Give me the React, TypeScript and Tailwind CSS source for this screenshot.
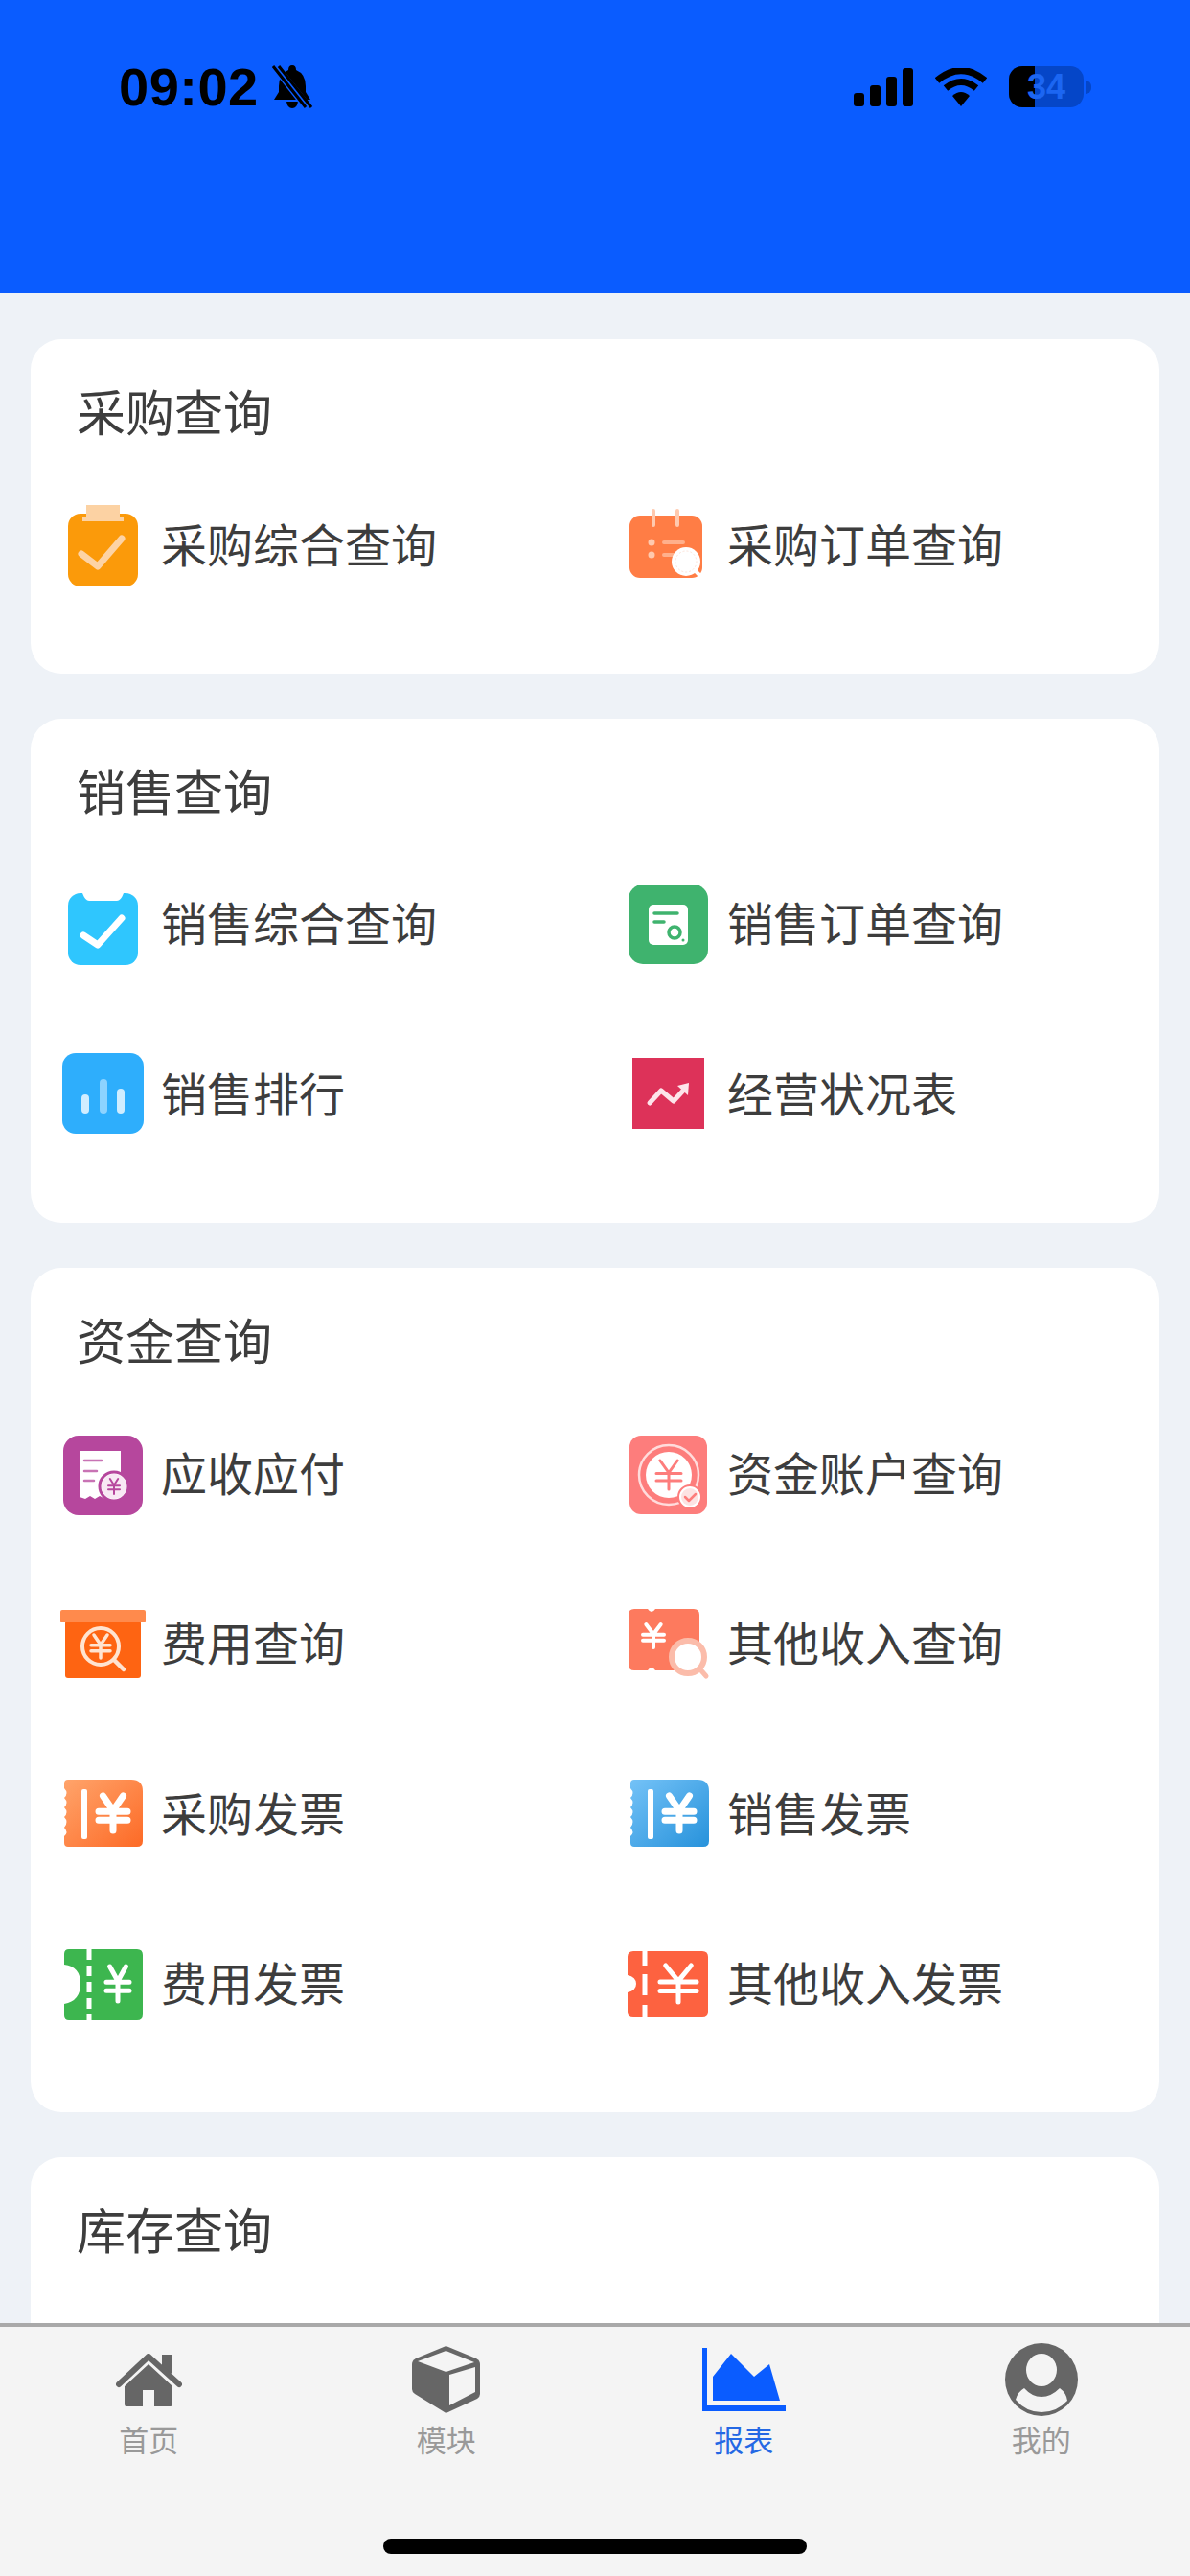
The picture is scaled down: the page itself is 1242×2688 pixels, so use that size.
import type { ReactNode } from 'react'

const Yen = ({ x, y, w, h, color, width = 4 }: { x: number; y: number; w: number; h: number; color: string; width?: number }) => (
  <path
    d={`M${x - w * 0.7} ${y - h} L${x} ${y - h * 0.15} L${x + w * 0.7} ${y - h} M${x - w} ${y - h * 0.1} H${x + w} M${x - w} ${y + h * 0.4} H${x + w} M${x} ${y - h * 0.15} V${y + h}`}
    fill="none"
    stroke={color}
    strokeWidth={width}
    strokeLinecap="round"
    strokeLinejoin="round"
  />
)

const ScallopTicket = ({ id, from, to }: { id: string; from: string; to: string }) => (
  <>
    <defs>
      <linearGradient id={id} x1="0" y1="0" x2="1" y2="1">
        <stop offset="0" stopColor={from} />
        <stop offset="1" stopColor={to} />
      </linearGradient>
    </defs>
    <path
      d="M11 12 H77 Q89 12 89 24 V76 Q89 82 83 82 H11 Q7 82 7 78 V71 Q12 67 7 62 Q12 56 7 51 Q12 46 7 41 Q12 36 7 31 Q12 26 7 21 V16 Q7 12 11 12 Z"
      fill={`url(#${id})`}
    />
    <rect x="25" y="22" width="6" height="52" rx="2" fill="#fff" />
    <Yen x={58} y={47} w={15} h={18} color="#fff" width={7} />
  </>
)

const icons: Record<string, ReactNode> = {
  purchaseAll: (
    <>
      <rect x="11" y="15" width="73" height="76" rx="13" fill="#fb9a0a" />
      <path d="M30 6 H65 V19 H69 V23 H26 V19 H30 Z" fill="#fcd2a3" />
      <path d="M25 57 L42 70 L67 41" fill="none" stroke="#fdd3a5" strokeWidth="7" strokeLinecap="round" strokeLinejoin="round" />
    </>
  ),
  purchaseOrder: (
    <>
      <rect x="6" y="17" width="76" height="65" rx="11" fill="#ff7d45" />
      <path d="M31 12 V27 M56 12 V27" stroke="#ffc9ae" strokeWidth="4" strokeLinecap="round" />
      <circle cx="29" cy="45" r="3.5" fill="#ffc9ae" />
      <circle cx="29" cy="58" r="3.5" fill="#ffc9ae" />
      <path d="M42 45 H62 M42 58 H54" stroke="#ffb08c" strokeWidth="4" strokeLinecap="round" />
      <circle cx="65" cy="65" r="15" fill="#fff" />
      <circle cx="65" cy="65" r="11" fill="none" stroke="#fde3d8" strokeWidth="1" strokeDasharray="2 2" />
      <path d="M75 75 L80 80" stroke="#fff" strokeWidth="4" strokeLinecap="round" />
    </>
  ),
  salesAll: (
    <>
      <rect x="11" y="16" width="73" height="75" rx="13" fill="#2fc6fe" />
      <path d="M26 16 Q29 24 33 24 H62 Q66 24 69 16 Z" fill="#fff" />
      <path d="M27 60 L42 70 L67 42" fill="none" stroke="#fff" strokeWidth="7" strokeLinecap="round" strokeLinejoin="round" />
    </>
  ),
  salesOrder: (
    <>
      <rect x="5" y="7" width="83" height="83" rx="15" fill="#3fb36e" />
      <rect x="26" y="28" width="41" height="42" rx="5" fill="#fff" />
      <path d="M32 37 H56 M32 46 H42" stroke="#3fb36e" strokeWidth="3.5" strokeLinecap="round" />
      <circle cx="53" cy="57" r="6" fill="none" stroke="#3fb36e" strokeWidth="3.5" />
      <circle cx="62" cy="65" r="1.5" fill="#3fb36e" />
    </>
  ),
  salesRank: (
    <>
      <rect x="5" y="5" width="85" height="84" rx="14" fill="#2eaefc" />
      <rect x="25" y="48" width="8" height="20" rx="4" fill="#d0edff" />
      <rect x="44" y="32" width="8" height="36" rx="4" fill="#8dd3ff" />
      <rect x="62" y="42" width="8" height="26" rx="4" fill="#d0edff" />
    </>
  ),
  business: (
    <>
      <rect x="9" y="10" width="75" height="74" fill="#dd3259" />
      <path d="M27 57 L39 44 L52 55 L63 43" fill="none" stroke="#fde4ea" strokeWidth="5" strokeLinecap="round" strokeLinejoin="round" />
      <path d="M56 39 L68 36 L67 49 Z" fill="#fde4ea" />
    </>
  ),
  receivable: (
    <>
      <rect x="6" y="8" width="83" height="83" rx="16" fill="#b6479d" />
      <path d="M23 24 H66 V60 H23 Z M23 60 V72 L29 74 L34 71 L39 74 L44 71 L50 74 V60 Z" fill="#fff" />
      <path d="M28 34 H46 M28 45 H41 M28 55 H38" stroke="#c873b4" strokeWidth="2.5" strokeLinecap="round" />
      <circle cx="59" cy="61" r="15" fill="#fff" stroke="#b6479d" strokeWidth="3" />
      <circle cx="59" cy="61" r="13" fill="#f8e9f4" />
      <Yen x={59} y={61} w={6} h={8} color="#b6479d" width={2} />
    </>
  ),
  account: (
    <>
      <rect x="6" y="8" width="81" height="82" rx="12" fill="#fd7d7c" />
      <circle cx="47" cy="49" r="31" fill="none" stroke="#ffdcdc" strokeWidth="2.5" />
      <circle cx="47" cy="49" r="24" fill="#fff" />
      <Yen x={47} y={49} w={13} h={15} color="#fd7d7c" width={3} />
      <circle cx="69" cy="72" r="12" fill="#fff" stroke="#fd7d7c" strokeWidth="2" />
      <circle cx="69" cy="72" r="9" fill="#fde3e3" />
      <path d="M64 72 L68 76 L75 69" fill="none" stroke="#fd7d7c" strokeWidth="2.5" strokeLinecap="round" strokeLinejoin="round" />
    </>
  ),
  expense: (
    <>
      <rect x="8" y="24" width="79" height="60" rx="3" fill="#fe6412" />
      <rect x="3" y="13" width="89" height="13" rx="2" fill="#ff8a4c" />
      <circle cx="45" cy="51" r="19" fill="none" stroke="#ffe3d0" strokeWidth="4" />
      <Yen x={45} y={51} w={10} h={12} color="#ffe3d0" width={3.5} />
      <path d="M59 65 L69 75" stroke="#ffe3d0" strokeWidth="4.5" strokeLinecap="round" />
    </>
  ),
  otherQuery: (
    <>
      <path d="M11 12 H25 Q29 18 33 12 H73 Q79 12 79 18 V70 Q79 76 73 76 H33 Q29 70 25 76 H11 Q5 76 5 70 V18 Q5 12 11 12 Z" fill="#fd7a5e" />
      <Yen x={31} y={40} w={11} h={12} color="#fff" width={4} />
      <path d="M79 74 L86 82" stroke="#fbbcaa" strokeWidth="5" strokeLinecap="round" />
      <circle cx="67" cy="62" r="17" fill="#fff" stroke="#fbbcaa" strokeWidth="6" />
    </>
  ),
  purchaseInvoice: <ScallopTicket id="ticketOrange" from="#ffa46b" to="#fd6a26" />,
  salesInvoice: <ScallopTicket id="ticketBlue" from="#74c2f7" to="#2792db" />,
  expenseInvoice: (
    <>
      <path d="M12 12 H83 Q89 12 89 18 V80 Q89 86 83 86 H12 Q7 86 7 81 V69 Q24 66 24 48 Q24 30 7 28 V17 Q7 12 12 12 Z" fill="#3db64f" />
      <path d="M33 12 V86" stroke="#fff" strokeWidth="5" strokeDasharray="11 6" />
      <Yen x={63} y={48} w={12} h={18} color="#fff" width={5} />
    </>
  ),
  otherInvoice: (
    <>
      <path d="M10 14 H82 Q88 14 88 20 V77 Q88 83 82 83 H10 Q4 83 4 77 V57 Q13 55 13 48 Q13 41 4 39 V20 Q4 14 10 14 Z" fill="#fd6240" />
      <path d="M22 14 V29 M22 38 V60 M22 70 V83" stroke="#fff" strokeWidth="5" />
      <Yen x={57} y={48} w={19} h={19} color="#fff" width={5} />
    </>
  ),
  stock: <rect x="15" y="8" width="63" height="80" rx="10" fill="#6fb0d8" />,
}

const sections = [
  {
    title: '采购查询',
    items: [
      ['purchaseAll', '采购综合查询'],
      ['purchaseOrder', '采购订单查询'],
    ],
  },
  {
    title: '销售查询',
    items: [
      ['salesAll', '销售综合查询'],
      ['salesOrder', '销售订单查询'],
      ['salesRank', '销售排行'],
      ['business', '经营状况表'],
    ],
  },
  {
    title: '资金查询',
    items: [
      ['receivable', '应收应付'],
      ['account', '资金账户查询'],
      ['expense', '费用查询'],
      ['otherQuery', '其他收入查询'],
      ['purchaseInvoice', '采购发票'],
      ['salesInvoice', '销售发票'],
      ['expenseInvoice', '费用发票'],
      ['otherInvoice', '其他收入发票'],
    ],
  },
  {
    title: '库存查询',
    items: [['stock', '']],
  },
]

function StatusBar() {
  return (
    <div className="flex h-[306px] shrink-0 items-start justify-between bg-[#0a5cff] pl-[124px] pr-[103px] pt-[68px] font-['Liberation_Sans',sans-serif] text-black">
      <div className="flex h-[45px] items-center">
        <span className="text-[56px] leading-[45px] font-bold tracking-[0.5px]">09:02</span>
        <svg className="ml-[13px]" width="44" height="46" viewBox="0 0 44 46">
          <path d="M22 0 Q26 0 26 5 Q36 9 36 22 V28 L41 36 H3 L8 28 V22 Q8 9 18 5 Q18 0 22 0 Z M16 38 H28 Q27 45 22 45 Q17 45 16 38 Z" fill="#000" />
          <path d="M4 1 L38 44" stroke="#0a5cff" strokeWidth="9" />
          <path d="M2 1 L36 44 M8 1 L42 44" stroke="#000" strokeWidth="3" />
        </svg>
      </div>
      <div className="flex h-[45px] items-center">
        <div className="flex items-end gap-[6px]">
          <div className="h-[14px] w-[11px] rounded-[3px] bg-black" />
          <div className="h-[22px] w-[11px] rounded-[3px] bg-black" />
          <div className="h-[31px] w-[11px] rounded-[3px] bg-black" />
          <div className="h-[40px] w-[11px] rounded-[3px] bg-black" />
        </div>
        <svg className="ml-[23px]" width="54" height="40" viewBox="0 0 54 40">
          <path d="M2 13 Q27 -8 52 13" fill="none" stroke="#000" strokeWidth="7" />
          <path d="M11 21 Q27 8 43 21" fill="none" stroke="#000" strokeWidth="7" />
          <path d="M18 29 Q27 21 36 29 L27 40 Z" fill="#000" />
        </svg>
        <div className="relative ml-[23px] flex h-[43px] w-[78px] items-center justify-center overflow-hidden rounded-[14px] bg-[#0546c8]">
          <div className="absolute inset-y-0 left-0 w-[27px] bg-black" />
          <span className="relative text-[36px] leading-none font-bold text-[#1c66f2]">34</span>
        </div>
        <div className="ml-[2px] h-[14px] w-[6px] rounded-r-full bg-[#0546c8]" />
      </div>
    </div>
  )
}

function TabIcon({ name }: { name: string }) {
  if (name === 'home') {
    return (
      <svg width="69" height="55" viewBox="0 0 69 55">
        <path d="M48 1 H59 V20 H48 Z" fill="#666" />
        <path d="M3 32 L34 3 L66 32" fill="none" stroke="#666" strokeWidth="6" strokeLinecap="round" strokeLinejoin="round" />
        <path d="M34 11 L59 34 V53 Q59 55 57 55 H40 V38 H28 V55 H11 Q9 55 9 53 V34 Z" fill="#666" />
      </svg>
    )
  }
  if (name === 'cube') {
    return (
      <svg width="71" height="70" viewBox="0 0 71 70">
        <path d="M35.5 0 L67 13 Q71 15 71 19 V50 Q71 53 68 55 L35.5 70 L3 50 Q0 48 0 45 V19 Q0 15 4 13 Z" fill="#666" />
        <path d="M35.5 5 L65 17 L35.5 27 L6 16 Z" fill="#f4f4f4" />
        <path d="M39 30 L66 22 V48 L39 62 Z" fill="#f4f4f4" />
      </svg>
    )
  }
  if (name === 'chart') {
    return (
      <svg width="87" height="66" viewBox="0 0 87 66">
        <path d="M0 0 H5 V60 H87 V66 H0 Z" fill="#0a5cff" />
        <path d="M11 30 L30 6 L54 30 L70 17 L81 55 H11 Z" fill="#0a5cff" />
      </svg>
    )
  }
  return (
    <svg width="76" height="76" viewBox="0 0 76 76">
      <circle cx="38" cy="38" r="38" fill="#666" />
      <ellipse cx="38" cy="28" rx="16" ry="17" fill="#f4f4f4" />
      <path d="M20 47 Q28 56 38 56 Q48 56 57 47 Q64 52 65 60 Q54 72 38 72 Q22 72 11 59 Q13 51 20 47 Z" fill="#f4f4f4" />
    </svg>
  )
}

const tabs = [
  { icon: 'home', label: '首页' },
  { icon: 'cube', label: '模块' },
  { icon: 'chart', label: '报表', active: true },
  { icon: 'user', label: '我的' },
]

export default function App() {
  return (
    <div className="flex h-[2688px] w-[1242px] flex-col overflow-hidden bg-[#eef2f7] font-['Noto_Sans_CJK_SC','Liberation_Sans',sans-serif]">
      <StatusBar />

      <main className="min-h-0 flex-1 overflow-hidden px-[32px] pt-[48px]">
        <div className="flex flex-col gap-[47px]">
          {sections.map((section) => (
            <section key={section.title} className="rounded-[32px] bg-white pb-[45px] pt-[48px]">
              <h2 className="h-[60px] pl-[48px] text-[51px] leading-[53px] font-normal text-[#3d3d3d]">{section.title}</h2>
              <div className="mt-[18px] grid grid-cols-[591px_587px]">
                {section.items.map(([icon, label]) => (
                  <div key={icon} className="flex h-[177.6px] items-center pl-[28px]">
                    <svg className="shrink-0" width="96" height="96" viewBox="0 0 96 96">
                      {icons[icon]}
                    </svg>
                    <span className="ml-[12px] pb-[6px] text-[48px] leading-none text-[#3d3d3d]">{label}</span>
                  </div>
                ))}
              </div>
            </section>
          ))}
        </div>
      </main>

      <footer className="flex h-[264px] shrink-0 flex-col border-t-4 border-[#a9a9a9] bg-[#f4f4f4]">
        <div className="grid grid-cols-4 pt-[17px]">
          {tabs.map((tab) => (
            <div key={tab.label} className="flex flex-col items-center">
              <div className="flex h-[76px] items-center">
                <TabIcon name={tab.icon} />
              </div>
              <span className={`mt-[4px] text-[31px] leading-[40px] ${tab.active ? 'text-[#2468e4]' : 'text-[#999999]'}`}>{tab.label}</span>
            </div>
          ))}
        </div>
        <div className="mb-[23px] mt-auto h-[16px] w-[442px] self-center rounded-full bg-black" />
      </footer>
    </div>
  )
}
